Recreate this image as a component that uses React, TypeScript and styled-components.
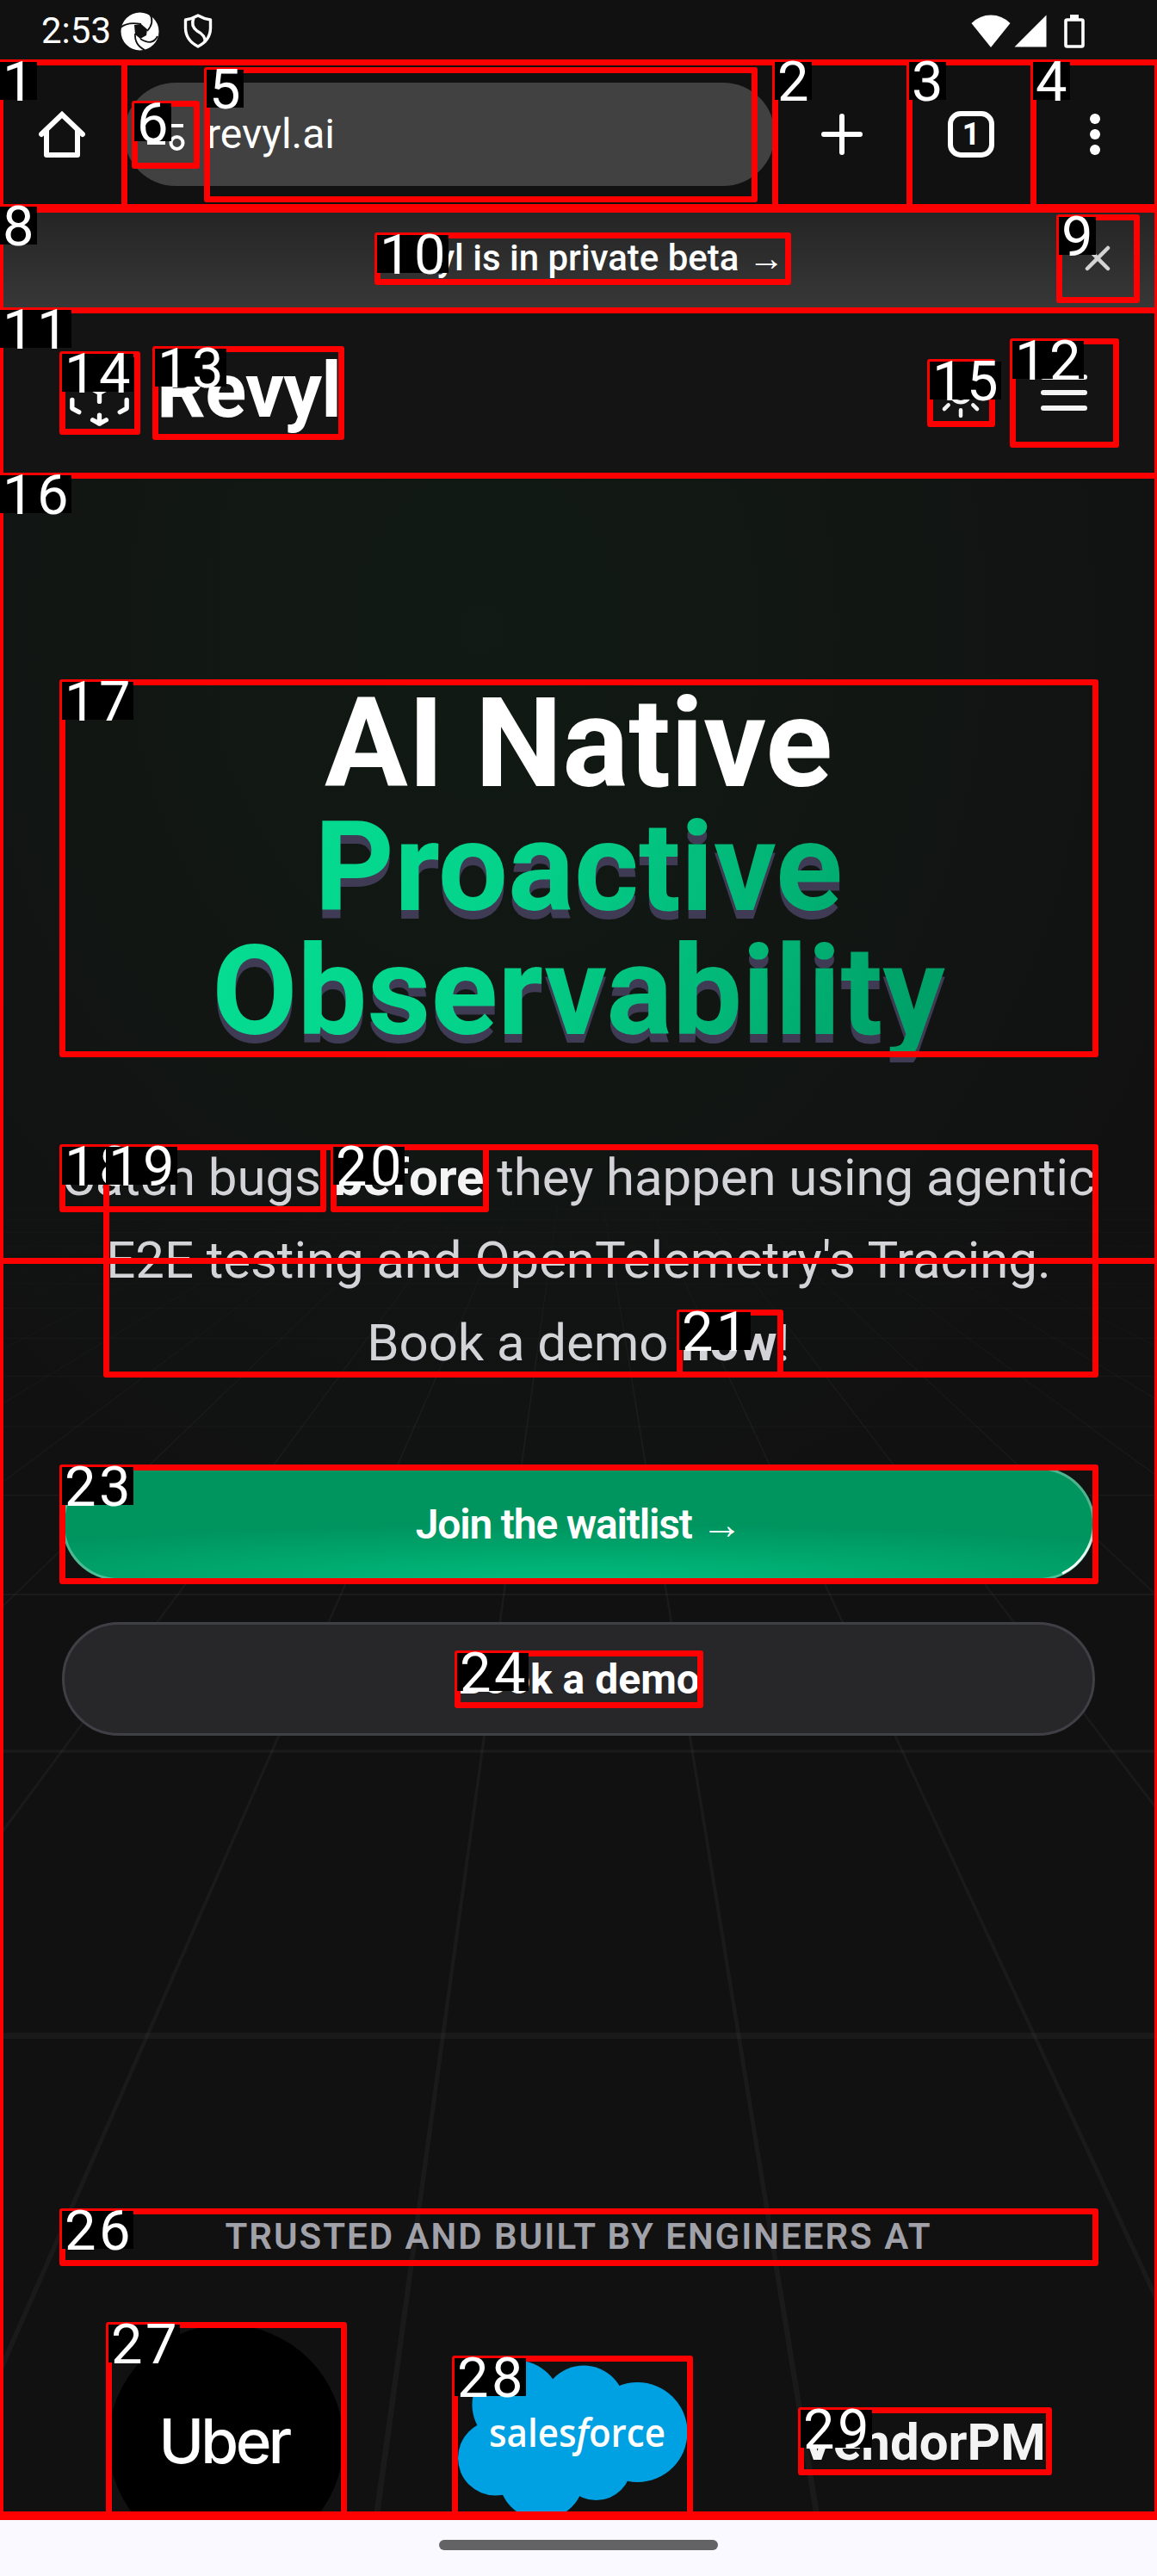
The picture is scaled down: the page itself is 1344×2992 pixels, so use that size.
import React from 'react';
import styled, { createGlobalStyle } from 'styled-components';

const GlobalStyle = createGlobalStyle`
  *, *::before, *::after { box-sizing: border-box; }
  html, body { margin: 0; padding: 0; background: #111; }
  body { font-family: Roboto, "Liberation Sans", sans-serif; color: #fff; }
`;

const Screen = styled.div`
  position: relative;
  display: flex;
  flex-direction: column;
  width: 1344px;
  height: 2992px;
  overflow: hidden;
  background: #111111;
`;

const StatusBar = styled.div`
  display: flex;
  align-items: center;
  flex: none;
  height: 72px;
  padding: 0 84px 0 48px;
`;

const Clock = styled.span`
  font-size: 42px;
  line-height: 72px;
  width: 92px;
`;

const StatusIcons = styled.div<{ $gap: number; $end?: boolean }>`
  display: flex;
  align-items: center;
  gap: ${(p) => p.$gap}px;
  margin-left: ${(p) => (p.$end ? 'auto' : '0')};
`;

const Toolbar = styled.div`
  display: flex;
  align-items: center;
  flex: none;
  height: 171px;
  padding-bottom: 3px;
`;

const ToolButton = styled.div<{ $width: number }>`
  display: flex;
  align-items: center;
  justify-content: center;
  width: ${(p) => p.$width}px;
  height: 168px;
`;

const UrlPill = styled.div`
  display: flex;
  align-items: center;
  width: 756px;
  height: 120px;
  padding-left: 12px;
  border-radius: 60px;
  background: #414141;
`;

const UrlText = styled.span`
  margin-left: 12px;
  font-size: 48px;
  line-height: 56px;
`;

const TabCount = styled.div`
  display: flex;
  align-items: center;
  justify-content: center;
  width: 54px;
  height: 54px;
  border: 6px solid #fff;
  border-radius: 15px;
  font-size: 36px;
  font-weight: 700;
  line-height: 42px;
`;

const Banner = styled.div`
  display: flex;
  align-items: center;
  flex: none;
  height: 117px;
  padding-left: 438px;
  padding-right: 24px;
  background: linear-gradient(180deg, #242424, #383838);
  font-size: 42px;
  font-weight: 500;
  white-space: nowrap;
`;

const BannerText = styled.span`
  padding-bottom: 4px;
`;

const CloseButton = styled.div`
  display: flex;
  align-items: center;
  justify-content: center;
  width: 90px;
  height: 96px;
  margin-left: auto;
  padding-bottom: 3px;
`;

const Header = styled.header`
  display: flex;
  align-items: center;
  flex: none;
  height: 192px;
  padding: 0 48px 0 68px;
  background: #131413;
`;

const Brand = styled.span`
  margin-left: 19px;
  padding-bottom: 5px;
  font-size: 89px;
  font-weight: 700;
  line-height: 102px;
  letter-spacing: -0.8px;
`;

const HeaderActions = styled.div`
  display: flex;
  align-items: center;
  gap: 24px;
  margin-left: auto;
`;

const MenuButton = styled.div`
  display: flex;
  flex-direction: column;
  align-items: center;
  justify-content: center;
  gap: 12px;
  width: 120px;
  height: 120px;
`;

const MenuLine = styled.span`
  width: 54px;
  height: 6px;
  border-radius: 3px;
  background: #f4f4f5;
`;

const Hero = styled.main`
  position: relative;
  flex: none;
  height: 2368px;
  padding: 240px 72px 0;
  overflow: hidden;
  background:
    radial-gradient(ellipse 900px 1100px at 560px 180px, rgba(20, 120, 50, 0.085), rgba(20, 110, 60, 0.05) 55%, transparent 100%),
    #111111;
`;

const GridFloor = styled.svg`
  position: absolute;
  left: 0;
  top: 0;
  mask-image: linear-gradient(180deg, transparent 620px, #000 1050px);
`;

const HeroContent = styled.div`
  position: relative;
  display: flex;
  flex-direction: column;
`;

const Title = styled.h1`
  margin: 0;
  font-size: 144px;
  font-weight: 700;
  line-height: 144px;
  text-align: center;
`;

const GradientText = styled.span`
  display: block;
  width: fit-content;
  margin: 0 auto;
  background: linear-gradient(105deg, #05dd91 5%, #04d28b 40%, #00a168 95%);
  background-clip: text;
  color: transparent;
  filter: drop-shadow(0 10px 0 #3f3b55);
`;

const Lead = styled.p`
  margin: 96px -10px 96px;
  font-size: 60px;
  line-height: 96px;
  letter-spacing: -0.1px;
  text-align: center;
  color: #d4d4d8;
`;

const Strong = styled.strong<{ $bright?: boolean }>`
  font-weight: 700;
  color: ${(p) => (p.$bright ? '#f4f4f5' : '#d4d4d8')};
`;

const Button = styled.div<{ $primary?: boolean }>`
  position: relative;
  display: flex;
  align-items: center;
  justify-content: center;
  height: 132px;
  border: 3px solid ${(p) => (p.$primary ? 'rgba(255,255,255,0.3)' : '#3f3f46')};
  border-radius: 66px;
  background: ${(p) =>
    p.$primary
      ? 'radial-gradient(ellipse 860px 66px at 50% 100%, #00bc7d, #00945f) border-box'
      : '#27272a'};
  font-size: 48px;
  font-weight: ${(p) => (p.$primary ? 600 : 700)};
  letter-spacing: ${(p) => (p.$primary ? '-1.2px' : '0')};
  white-space: nowrap;
`;

const Shine = styled.svg`
  position: absolute;
  right: -3px;
  bottom: -3px;
`;

const ButtonStack = styled.div`
  display: flex;
  flex-direction: column;
  gap: 48px;
`;

const TrustedLabel = styled.div`
  margin-top: 552px;
  font-size: 42px;
  font-weight: 600;
  line-height: 60px;
  letter-spacing: 2px;
  text-align: center;
  color: #a1a1aa;
`;

const LogoRow = styled.div`
  display: flex;
  align-items: center;
  gap: 129px;
  height: 273px;
  margin-top: 72px;
  padding-left: 54px;
`;

const UberLogo = styled.div`
  display: flex;
  align-items: center;
  justify-content: center;
  flex: none;
  width: 273px;
  height: 273px;
  padding: 0 5px 4px 0;
  border-radius: 50%;
  background: #000;
  font-family: Inter, sans-serif;
  font-size: 71px;
  font-weight: 500;
  letter-spacing: -3.6px;
`;

const CloudLogo = styled.svg`
  flex: none;
`;

const VendorLogo = styled.span`
  font-size: 60px;
  font-weight: 700;
  line-height: 72px;
  color: #f4f4f5;
`;

const GestureBar = styled.div`
  display: flex;
  align-items: center;
  justify-content: center;
  flex: none;
  height: 72px;
  background: #f9f9ff;
`;

const GestureHandle = styled.div`
  width: 324px;
  height: 12px;
  border-radius: 6px;
  background: #636366;
`;

const Overlay = styled.div`
  position: absolute;
  inset: 0;
  overflow: hidden;
  pointer-events: none;
`;

const Outline = styled.div<{ $l: number; $t: number; $r: number; $b: number }>`
  position: absolute;
  left: ${(p) => p.$l - 3}px;
  top: ${(p) => p.$t - 3}px;
  width: ${(p) => p.$r - p.$l + 7}px;
  height: ${(p) => p.$b - p.$t + 7}px;
  border: 7px solid #ff0000;
  border-radius: 3px;
`;

const Tag = styled.div<{ $l: number; $t: number; $wide: boolean }>`
  position: absolute;
  left: ${(p) => p.$l}px;
  top: ${(p) => p.$t}px;
  width: ${(p) => (p.$wide ? 83 : 43)}px;
  height: 44px;
  padding-left: 3px;
  background: #000;
  font-size: 65px;
  font-weight: 400;
  line-height: 47px;
  letter-spacing: 3.5px;
  white-space: nowrap;
`;

type Mark = { n?: number; box: [number, number, number, number] };

const MARKS: Mark[] = [
  { box: [0, 72, 1344, 243] },
  { box: [0, 243, 1344, 2923] },
  { n: 1, box: [0, 72, 144, 240] },
  { n: 2, box: [900, 72, 1056, 240] },
  { n: 3, box: [1056, 72, 1200, 240] },
  { n: 4, box: [1200, 72, 1344, 240] },
  { n: 5, box: [240, 81, 876, 231] },
  { n: 6, box: [156, 120, 228, 192] },
  { n: 8, box: [0, 240, 1344, 360] },
  { n: 9, box: [1230, 252, 1320, 348] },
  { n: 10, box: [438, 273, 915, 327] },
  { n: 11, box: [0, 360, 1344, 552] },
  { n: 12, box: [1176, 396, 1296, 516] },
  { n: 13, box: [180, 405, 396, 507] },
  { n: 14, box: [72, 411, 159, 501] },
  { n: 15, box: [1080, 420, 1152, 492] },
  { n: 16, box: [0, 552, 1344, 2920] },
  { n: 17, box: [72, 792, 1272, 1224] },
  { n: 18, box: [72, 1332, 375, 1404] },
  { n: 19, box: [123, 1332, 1272, 1596] },
  { n: 20, box: [387, 1332, 564, 1404] },
  { n: 21, box: [789, 1524, 906, 1596] },
  { box: [0, 1464, 1344, 2920] },
  { n: 23, box: [72, 1704, 1272, 1836] },
  { n: 24, box: [531, 1920, 813, 1980] },
  { n: 26, box: [72, 2568, 1272, 2628] },
  { n: 27, box: [126, 2700, 399, 2920] },
  { n: 28, box: [528, 2739, 801, 2920] },
  { n: 29, box: [930, 2799, 1218, 2871] },
];

const HORIZON = 671;
const FLOOR = 2368;

const Floor = () => {
  const depth = FLOOR - HORIZON;
  const rails = Array.from({ length: 28 }, (_, i) => i - 14).map((n) => {
    const x = 672 + depth * (0.301 * (n + 0.5) + 0.0125);
    const half = depth * 0.0021;
    return <polygon key={n} points={`672,${HORIZON} ${x - half},${FLOOR} ${x + half},${FLOOR}`} />;
  });
  const rungs = Array.from({ length: 14 }, (_, i) => i).map((n) => {
    const d = 1 / (0.000876 + 0.000357 * n);
    const h = Math.max(0.8, d * d * 0.0000054);
    return <rect key={n} x={0} y={HORIZON + d - h / 2} width={1344} height={h} />;
  });
  return (
    <GridFloor width={1344} height={FLOOR} fill="#ffffff" fillOpacity={0.04}>
      {rails}
      {rungs}
    </GridFloor>
  );
};

const ApertureIcon = () => (
  <svg width={45} height={45} viewBox="0 0 45 45">
    <circle cx={22.5} cy={22.5} r={22} fill="#fff" />
    <path d="M16 15 L24 14 L31 20 L30 27 L23 31 L17 26 Z" fill="#111" />
    <g fill="none" stroke="#111" strokeWidth={1.8}>
      <path d="M0 18 Q8 11 24 14" />
      <path d="M34 2 Q40 12 31 22" />
      <path d="M43 28 Q37 40 23 31" />
      <path d="M28 44 Q16 38 17 25" />
    </g>
  </svg>
);

const ShieldIcon = () => (
  <svg width={34} height={40} viewBox="0 0 34 40" fill="none" stroke="#fff" strokeWidth={3.4} strokeLinejoin="round">
    <path d="M17 2 Q24 6 31.500 7 V17 Q31 31 17 38 Q3 31 2.500 17 V7 Q10 6 17 2 Z" />
    <path d="M12 5 Q8 14 16 20 Q26 25 25 33" />
  </svg>
);

const WifiIcon = () => (
  <svg width={46} height={39} viewBox="0 0 46 39">
    <path d="M23 38 L0.500 10 Q10 0.500 23 0.500 Q36 0.500 45.500 10 Z" fill="#fff" />
  </svg>
);

const SignalIcon = () => (
  <svg width={38} height={38} viewBox="0 0 38 38">
    <path d="M37.500 0.500 V37.500 H0.500 Z" fill="#fff" />
  </svg>
);

const BatteryIcon = () => (
  <svg width={24} height={39} viewBox="0 0 24 39">
    <rect x={7} y={0} width={10} height={6} fill="#fff" />
    <rect x={2} y={6} width={20} height={31} rx={1.5} fill="none" stroke="#fff" strokeWidth={3.6} />
  </svg>
);

const HomeIcon = () => (
  <svg width={54} height={54} viewBox="0 0 54 54" fill="none" stroke="#fff" strokeWidth={6} strokeLinejoin="round" strokeLinecap="round">
    <path d="M3 27 L27 4 L51 27" strokeLinejoin="miter" />
    <path d="M9 22 V51 H45 V22" />
  </svg>
);

const TuneIcon = () => (
  <svg width={72} height={72} viewBox="0 0 72 72" fill="none" stroke="#fff" strokeWidth={4}>
    <circle cx={23} cy={26} r={7} />
    <path d="M36 26 H57" />
    <circle cx={49.5} cy={46} r={7} />
    <path d="M15 46 H36" />
  </svg>
);

const PlusIcon = () => (
  <svg width={48} height={48} viewBox="0 0 48 48" stroke="#fff" strokeWidth={6} strokeLinecap="round">
    <path d="M24 3 V45 M3 24 H45" />
  </svg>
);

const DotsIcon = () => (
  <svg width={12} height={48} viewBox="0 0 12 48" fill="#fff">
    <circle cx={6} cy={6} r={6} />
    <circle cx={6} cy={24} r={6} />
    <circle cx={6} cy={42} r={6} />
  </svg>
);

const CloseIcon = () => (
  <svg width={30} height={30} viewBox="0 0 30 30" stroke="#d4d4d4" strokeWidth={4.5} strokeLinecap="round">
    <path d="M3 3 L27 27 M27 3 L3 27" />
  </svg>
);

const CubeIcon = () => (
  <svg width={95} height={95} viewBox="0 0 24 24" fill="none" stroke="#fff" strokeWidth={1.35} strokeLinecap="round" strokeLinejoin="round">
    <path d="M6 17.6l-2-1.1v-2.500 M4 10v-2.500l2-1.1 M10 4.1l2-1.1 2 1.1 M18 6.4l2 1.1v2.500 M20 14v2.500l-2 1.12 M14 19.900l-2 1.1-2-1.1 M12 12l2-1.1 M18 8.6l2-1.1 M12 12v2.500 M12 18.500V21 M12 12l-2-1.12 M6 8.6L4 7.500" />
  </svg>
);

const SunIcon = () => (
  <svg width={72} height={72} viewBox="0 0 24 24" fill="none" stroke="#f4f4f5" strokeWidth={1.5} strokeLinecap="round" strokeLinejoin="round">
    <path d="M12 3v2.25m6.364.386-1.591 1.591M21 12h-2.25m-.386 6.364-1.591-1.591M12 18.75V21m-4.773-4.227-1.591 1.591M5.25 12H3m4.227-4.773L5.636 5.636M15.75 12a3.75 3.75 0 1 1-7.5 0 3.75 3.75 0 0 1 7.5 0Z" />
  </svg>
);

const SalesforceLogo = () => (
  <CloudLogo width={273} height={195} viewBox="528 2739 273 195">
    <g fill="#00a1e3">
      <circle cx={600} cy={2793} r={51.5} />
      <circle cx={678} cy={2796} r={48.5} />
      <circle cx={740.5} cy={2825} r={58} />
      <circle cx={692.5} cy={2863} r={41} />
      <circle cx={629} cy={2877} r={49.5} />
      <circle cx={575.500} cy={2855} r={43.5} />
      <rect x={570} y={2790} width={150} height={90} />
    </g>
    <text
      x={568}
      y={2842}
      fill="#fff"
      fontFamily="'Open Sans', 'Noto Sans', sans-serif"
      fontSize={46}
      fontWeight={600}
      textLength={205}
      lengthAdjust="spacingAndGlyphs"
    >
      sales<tspan fontStyle="italic">f</tspan>orce
    </text>
  </CloudLogo>
);

export default function App() {
  return (
    <Screen>
      <GlobalStyle />
      <StatusBar>
        <Clock>2:53</Clock>
        <StatusIcons $gap={28}>
          <ApertureIcon />
          <ShieldIcon />
        </StatusIcons>
        <StatusIcons $gap={4} $end>
          <WifiIcon />
          <SignalIcon />
          <StatusIcons $gap={0}>
            <svg width={16} height={1} />
            <BatteryIcon />
          </StatusIcons>
        </StatusIcons>
      </StatusBar>

      <Toolbar>
        <ToolButton $width={144}><HomeIcon /></ToolButton>
        <UrlPill>
          <TuneIcon />
          <UrlText>revyl.ai</UrlText>
        </UrlPill>
        <ToolButton $width={156}><PlusIcon /></ToolButton>
        <ToolButton $width={144}><TabCount>1</TabCount></ToolButton>
        <ToolButton $width={144}><DotsIcon /></ToolButton>
      </Toolbar>

      <Banner>
        <BannerText>Revyl is in private beta →</BannerText>
        <CloseButton><CloseIcon /></CloseButton>
      </Banner>

      <Header>
        <CubeIcon />
        <Brand>Revyl</Brand>
        <HeaderActions>
          <SunIcon />
          <MenuButton>
            <MenuLine />
            <MenuLine />
            <MenuLine />
          </MenuButton>
        </HeaderActions>
      </Header>

      <Hero>
        <Floor />
        <HeroContent>
          <Title>
            AI Native
            <GradientText>Proactive<br />Observability</GradientText>
          </Title>
          <Lead>
            Catch bugs <Strong $bright>before</Strong> they happen using agentic<br />
            E2E testing and OpenTelemetry's Tracing.<br />
            Book a demo <Strong>now</Strong>!
          </Lead>
          <ButtonStack>
            <Button $primary>
              Join the waitlist →
              <Shine width={80} height={80} viewBox="0 0 80 80" fill="none">
                <defs>
                  <linearGradient id="shine" x1="0" y1="1" x2="0" y2="0">
                    <stop offset="0" stopColor="#fff" />
                    <stop offset="0.55" stopColor="#fff" stopOpacity={0.8} />
                    <stop offset="1" stopColor="#fff" stopOpacity={0} />
                  </linearGradient>
                </defs>
                <path d="M42 71.500 A64.500 64.500 0 0 0 78.500 14" stroke="url(#shine)" strokeWidth={3} />
              </Shine>
            </Button>
            <Button>Book a demo</Button>
          </ButtonStack>
          <TrustedLabel>TRUSTED AND BUILT BY ENGINEERS AT</TrustedLabel>
          <LogoRow>
            <UberLogo>Uber</UberLogo>
            <SalesforceLogo />
            <VendorLogo>VendorPM</VendorLogo>
          </LogoRow>
        </HeroContent>
      </Hero>

      <GestureBar>
        <GestureHandle />
      </GestureBar>

      <Overlay>
        {MARKS.map(({ box: [l, t, r, b] }, i) => (
          <Outline key={i} $l={l} $t={t} $r={r} $b={b} />
        ))}
        {MARKS.filter((m) => m.n !== undefined).map(({ n, box }) => (
          <Tag key={n} $l={box[0]} $t={box[1]} $wide={n! > 9}>{n}</Tag>
        ))}
      </Overlay>
    </Screen>
  );
}
